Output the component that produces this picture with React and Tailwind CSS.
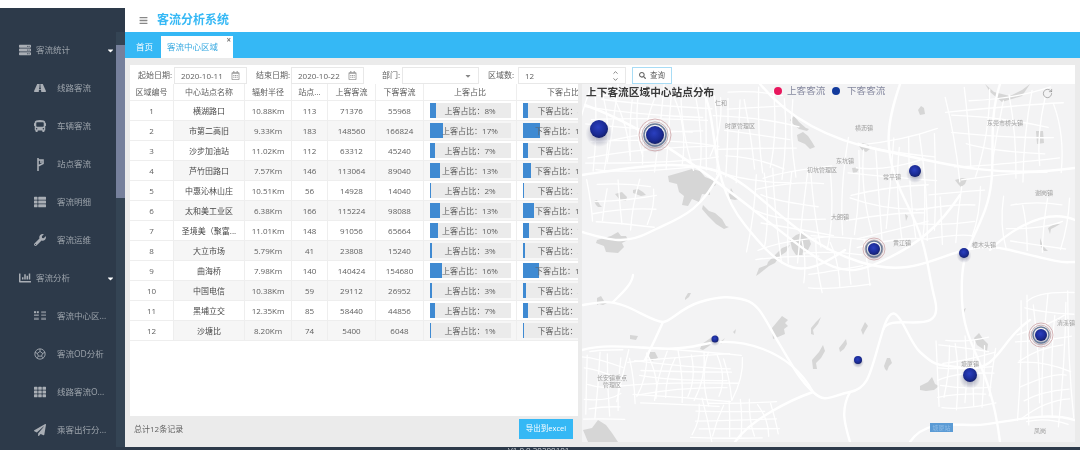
import React from "react";
import { FaRoad, FaBus, FaWrench, FaThList, FaChartBar, FaTh, FaPaperPlane, FaServer, FaRegCalendarAlt, FaSearch, FaBars, FaCaretDown } from "react-icons/fa";
import { RotateCw, ChevronUp, ChevronDown } from "lucide-react";

const font = { fontFamily: '"Open Sans","Noto Sans CJK SC",sans-serif' };

const Fork = () => (
  <svg width="11" height="13" viewBox="0 0 11 13" fill="none" stroke="currentColor" strokeWidth="1.6">
    <path d="M3 0v13M3 2h5v3.500L3 8M6 2v3" />
  </svg>
);
const Blocks = () => (
  <svg width="15" height="12" viewBox="0 0 15 12" fill="currentColor">
    <rect x="0" y="0" width="2.500" height="2.500" /><rect x="3.500" y="0" width="2.500" height="2.500" />
    <rect x="0" y="4" width="6" height="2" opacity=".7" /><rect x="0" y="8" width="6" height="3" opacity=".6" />
    <rect x="9" y="0" width="6" height="2.500" opacity=".6" /><rect x="9" y="4" width="6" height="2" opacity=".6" /><rect x="9" y="8" width="6" height="3" opacity=".6" />
  </svg>
);
const Ball = () => (
  <svg width="14" height="14" viewBox="0 0 14 14" fill="none" stroke="currentColor" strokeWidth="1">
    <circle cx="7" cy="7" r="6" /><path d="M7 4l3 2.200-1.100 3.300H5.100L4 6.200zM7 4V1M10 6.200l3-1M8.900 9.500l2 2.400M5.100 9.500l-2 2.400M4 6.200l-3-1" />
  </svg>
);

const menu = [
  { t: "客流统计", I: FaServer, top: true },
  { t: "线路客流", I: FaRoad },
  { t: "车辆客流", I: FaBus },
  { t: "站点客流", I: Fork },
  { t: "客流明细", I: FaThList },
  { t: "客流运维", I: FaWrench },
  { t: "客流分析", I: FaChartBar, top: true },
  { t: "客流中心区...", I: Blocks },
  { t: "客流OD分析", I: Ball },
  { t: "线路客流O...", I: FaTh },
  { t: "乘客出行分...", I: FaPaperPlane },
];

const rows = [
  [1, "横湖路口", "10.88Km", 113, 71376, 55968, 8, 5, 8],
  [2, "市第二高旧", "9.33Km", 183, 148560, 166824, 17, 17, 19],
  [3, "沙步加油站", "11.02Km", 112, 63312, 45240, 7, 5, 5],
  [4, "芦竹田路口", "7.57Km", 146, 113064, 89040, 13, 8.500, 10],
  [5, "中惠沁林山庄", "10.51Km", 56, 14928, 14040, 2, 1, 2],
  [6, "太和美工业区", "6.38Km", 166, 115224, 98088, 13, 11, 11],
  [7, "圣境美（聚富...", "11.01Km", 148, 91056, 65664, 10, 6, 7],
  [8, "大立市场", "5.79Km", 41, 23808, 15240, 3, 2, 2],
  [9, "曲海桥", "7.98Km", 140, 140424, 154680, 16, 16, 18],
  [10, "中国电信", "10.38Km", 59, 29112, 26952, 3, 3, 3],
  [11, "黑埔立交", "12.35Km", 85, 58440, 44856, 7, 5, 5],
  [12, "沙塘比", "8.20Km", 74, 5400, 6048, 1, 1, 1],
];

const cols = "grid grid-cols-[44px_71px_47px_36px_48px_48px_93px_93px]";

function Cell({ children, shade }) {
  return (
    <div className={`flex items-center justify-center border-r border-b border-[#eeeeee] whitespace-nowrap overflow-hidden ${shade ? "bg-[#f6f6f6]" : "bg-white"}`}>
      {children}
    </div>
  );
}

function Bar({ w, label }) {
  return (
    <div className="relative h-[15px] w-[81px] bg-[#ebebeb] flex items-center justify-center shrink-0">
      <div className="absolute left-0 top-0 h-full bg-[#3f8ad2]" style={{ width: w }} />
      <span className="relative">{label}</span>
    </div>
  );
}

/* ---------- map drawing ---------- */
function rng(seed) {
  let s = seed;
  return () => {
    s = (s * 16807) % 2147483647;
    return s / 2147483647;
  };
}
function cluster(seed, cx, cy, rx, ry, nh, nv) {
  const r = rng(seed);
  const out = [];
  for (let i = 0; i < nh; i++) {
    const y = cy - ry + (2 * ry * (i + 0.5)) / nh;
    const x0 = cx - rx * (0.6 + r() * 0.4);
    const x1 = cx + rx * (0.6 + r() * 0.4);
    const t = (r() - 0.5) * ry * 0.3;
    out.push(`M${x0} ${y + t}Q${cx + (r() - 0.5) * rx * 0.6} ${y + (r() - 0.5) * ry * 0.3} ${x1} ${y - t}`);
  }
  for (let i = 0; i < nv; i++) {
    const x = cx - rx + (2 * rx * (i + 0.5)) / nv;
    const y0 = cy - ry * (0.6 + r() * 0.4);
    const y1 = cy + ry * (0.6 + r() * 0.4);
    const t = (r() - 0.5) * rx * 0.25;
    out.push(`M${x + t} ${y0}Q${x + (r() - 0.5) * rx * 0.3} ${cy} ${x - t} ${y1}`);
  }
  return out;
}
const streets = [
  ...cluster(11, 650, 128, 70, 44, 11, 15),
  ...cluster(19, 620, 205, 38, 26, 4, 5),
  ...cluster(23, 755, 135, 45, 48, 7, 8),
  ...cluster(29, 790, 215, 45, 50, 7, 7),
  ...cluster(37, 890, 190, 50, 60, 9, 9),
  ...cluster(41, 1005, 135, 60, 48, 7, 8),
  ...cluster(47, 1035, 225, 40, 30, 3, 4),
  ...cluster(53, 680, 378, 62, 30, 9, 13),
  ...cluster(59, 603, 385, 22, 40, 7, 4),
  ...cluster(67, 735, 420, 45, 22, 5, 8),
  ...cluster(71, 965, 372, 32, 38, 8, 7),
  ...cluster(83, 1045, 360, 30, 70, 10, 7),
  ...cluster(89, 835, 262, 40, 32, 4, 5),
  ...cluster(91, 950, 215, 35, 30, 4, 4),
];
const majors = [
  "M583 305C600 302 610 300 625 306S655 322 663 322 680 308 700 302 730 296 745 300 765 320 780 345 800 380 813 392 830 396 850 392 870 372 883 330 905 338 920 352 935 365 967 368 1000 340 1030 320 1075 300",
  "M850 392C840 410 845 425 850 442M663 322C655 340 650 350 645 360M633 275C632 285 620 295 613 302",
  "M582 175C630 168 680 158 720 172S790 240 860 262 950 235 1010 250 1060 262 1075 262",
  "M585 105C640 125 690 160 760 215S840 280 880 262 940 225 960 195",
  "M700 84C722 125 705 175 745 225S800 280 845 250",
  "M760 84C790 120 830 140 880 150S990 180 1075 168",
  "M900 84C888 120 880 150 905 200S925 260 935 300 890 310 883 330",
  "M1000 84C985 130 1000 170 985 210S960 250 962 300 990 360 1000 442",
  "M582 350C620 340 660 355 700 345S790 350 813 392",
  "M910 442C925 420 950 425 975 425S1040 410 1075 420",
  "M582 232C610 240 625 245 650 232S700 215 720 172",
  "M1075 220C1040 205 1000 240 990 250M735 442C750 420 790 400 813 392",
];
const lakes = [
  "M668 176l14-4 10-3 8 2 5 6 8 3 3 5-6 3 0 7-8-1-3 8-7-3-4 7-6-1 2-9-5-4-2-8-8-2z",
  "M703 205l6 6 6 2 7 6 4 7 3 1-5 2-8-5-8-8-6-7z",
  "M597 240l14-4 7-4 3 4 5 0 2 4-6 3 2 4-6 6-12-1-2-6-8-3z",
  "M615 194l7-2 5 5-1 4-6-1z M633 190l5-1 5 3 3 3-5 1-8-3z",
  "M594 201l3-1 3 5 2 2-4 0-2-2z M731 188l3 6 5 5-4 1-5-1-1-4z",
  "M790 120l4-4 5 6 7 6 3 1-2 2-8-2-6-5z M797 135l6-3 5 4 4 6 3 5-5 2-5-5-7-3z",
  "M790 240l6-5 8-3 4 4 3 8-3 6-6 5-6 0-4-6z",
  "M702 344l10-7 5-3-2 6-6 6-6 4-3-1z M720 342l5-4-4 6z M733 332l3-3-1 5z",
  "M768 262l8-8 6-6 8-3-4 7-6 4-5 7-6 3-5 4-5 4-3 2 3-8 8-3z",
  "M772 328l5-6 5-6 6 4-3 3 3 3-4 3 1 5-7 3-5 2z",
  "M816 322l5-5-3 7-5 6 1 5-3-1 0-6z M630 335l8 1-2 4-6-1z M650 352l5 0 3 6-6 3-3-4z",
  "M583 430l9-2 6-8 8 5 6 8 6 9-30 0z",
  "M597 298l4-2 3 5 3 2-4 2-4-1-2 1z M685 298l3-5 3 0-2 4-4 3z",
  "M861 330l4-8 3 4-3 5-2 4z M839 348l4-5 3-4 1 5-3 5-4 3z M812 360l7-8 4-7 2 6-4 7-5 5 1 6-4 0z",
  "M920 386l8-4 4-5 3 7 4 2-5 4-8 1-6-1z M884 366l3-8 3 0 2 5-3 3-2 5-2-2z",
  "M974 338l5-5 4 6 5 5-1 7-4-2-6-4z M962 310l4-2-2 5z",
  "M862 150l-3-4 4-3 5 1 2 5-4 3z M852 168l8-1-3 5-4 1z M918 110l3-4 3 2 1 6-5 1z",
  "M955 180l7-2 5 1-2 5-4 3-3-3z M905 214l3 2-2 5z",
  "M1036 131l7 0 1 12-7 1z",
  "M985 84l9 8 16 4 12-6 8-6-8 12-20 6-12-10z",
  "M1048 228l6-4 6 0-5 3-4 2-1 5z M1040 238l3 8 5 5-4 0-4-6z",
];
const labels = [
  ["仁和", 721, 105], ["时厦管理区", 740, 128], ["横沥镇", 864, 130], ["东坑镇", 845, 163], ["初坑管理区", 822, 172],
  ["常平镇", 892, 179], ["东莞市桥头镇", 1005, 125], ["谢岗镇", 1044, 195], ["大朗镇", 840, 219], ["黄江镇", 902, 245],
  ["樟木头镇", 984, 247], ["塘厦镇", 970, 366], ["清溪镇", 1066, 325], ["凤岗", 1040, 433], ["长安镇重点", 612, 380], ["管理区", 612, 387],
];
const markers = [
  [599, 129, 9, 0], [655, 135, 9, 16], [915, 171, 6, 0], [874, 249, 6, 11], [964, 253, 5, 0],
  [715, 339, 3.500, 0], [858, 360, 4, 0], [970, 375, 7, 0], [1041, 335, 6, 12],
];

function MapArt() {
  return (
    <svg className="block w-full h-full" viewBox="582 84 493 358" fill="none">
      <defs>
        <radialGradient id="ball" cx="45%" cy="40%" r="60%">
          <stop offset="0%" stopColor="#2a3fc0" />
          <stop offset="70%" stopColor="#1a2a92" />
          <stop offset="100%" stopColor="#14206a" />
        </radialGradient>
        <radialGradient id="shadow">
          <stop offset="0%" stopColor="#2a2f5c" stopOpacity=".5" />
          <stop offset="100%" stopColor="#2a2f5c" stopOpacity="0" />
        </radialGradient>
      </defs>
      {lakes.map((d, i) => <path key={i} d={d} fill="#d6d6d6" />)}
      <g stroke="#ffffff" strokeWidth="1.300" strokeLinecap="round">
        {streets.map((d, i) => <path key={i} d={d} />)}
      </g>
      <g stroke="#ffffff" strokeWidth="2.400" strokeLinecap="round">
        {majors.map((d, i) => <path key={i} d={d} />)}
      </g>
      <g fill="#a0a0a0" fontSize="6" textAnchor="middle" style={font}>
        {labels.map(([t, x, y]) => <text key={t} x={x} y={y}>{t}</text>)}
      </g>
      <rect x="930" y="423" width="23" height="9" fill="#5b9bd5" />
      <text x="941.500" y="430" fontSize="6" textAnchor="middle" fill="#8fbce6" style={font}>塘厦站</text>
      {markers.map(([x, y, r, ring], i) => (
        <g key={i}>
          <ellipse cx={x} cy={y + r * 0.5} rx={r * 1.5} ry={r * 1.5} fill="url(#shadow)" />
          {ring > 0 && (
            <>
              <circle cx={x} cy={y} r={ring} stroke="#c99a9c" strokeWidth=".7" />
              <circle cx={x} cy={y} r={ring * 0.82} stroke="#b5959b" strokeWidth=".7" />
              <circle cx={x} cy={y} r={r + 2} stroke="#6a7c98" strokeWidth="1.500" />
            </>
          )}
          <circle cx={x} cy={y} r={r} fill="url(#ball)" />
        </g>
      ))}
    </svg>
  );
}

function Sidebar() {
  return (
    <div className="relative w-[125px] shrink-0 bg-[#2d3a4a] pt-[23px] overflow-hidden text-[8.5px] text-[#9ca3ab]">
      {menu.map(({ t, I, top }) => (
        <div key={t} className={`h-[38px] flex items-center whitespace-nowrap ${top ? "pl-[13px]" : "pl-[34px]"}`}>
          <span className={`flex justify-center text-[#a9aeb5] text-[12px] ${top ? "w-[23px]" : "w-[12px] mr-[11px]"}`}><I /></span>
          <span>{t}</span>
          {top && <FaCaretDown className="absolute left-[106px] text-[9px] text-white" />}
        </div>
      ))}
      <div className="absolute right-0 top-[24px] bottom-0 w-[9px] bg-[#344454]">
        <div className="mt-[13px] h-[153px] bg-[#76809c]" />
      </div>
    </div>
  );
}

function Field({ label, children, w, ml = "ml-0", lw, gap = "ml-[2px]" }) {
  return (
    <>
      <span className={`shrink-0 whitespace-nowrap ${ml} ${lw}`}>{label}</span>
      <div className={`h-[17px] mt-[2px] flex items-center justify-between px-[6px] border border-[#e8e8e8] bg-white shrink-0 ${gap} ${w}`}>{children}</div>
    </>
  );
}

export default function App() {
  return (
    <div className="w-[1080px] h-[450px] flex flex-col overflow-hidden bg-[#ebebeb] blur-[0.7px] text-[#606060]" style={font}>
      <div className="h-2 bg-white shrink-0" />
      <div className="h-[439px] flex shrink-0">
        <Sidebar />
        <div className="flex-1 flex flex-col min-w-0">
          <div className="h-6 bg-white flex items-center pl-[14px] shrink-0">
            <FaBars className="text-[9px] text-[#888888]" />
            <span className="ml-[9px] text-[12px] font-semibold text-[#35b8f5]">客流分析系统</span>
          </div>
          <div className="h-[26px] bg-[#35b8f5] flex items-end pl-[11px] text-[8.5px] shrink-0">
            <span className="h-[22px] flex items-center text-white">首页</span>
            <div className="relative ml-[8px] h-[22px] w-[72px] bg-white flex items-center pl-[6px] text-[#35a8e0]">
              客流中心区域
              <span className="absolute right-[2px] top-[-1px] text-[8px] leading-[10px] font-bold text-[#777777]">×</span>
            </div>
          </div>
          <div className="flex-1 flex flex-col pt-[7px] px-[5px] pb-[5px] min-h-0">
            <div className="h-[19px] bg-white flex items-start shrink-0 text-[8px] leading-[19px] relative z-10">
              <Field label="起始日期:" lw="w-[42px] pl-[8px]" w="w-[73px]"><span>2020-10-11</span><FaRegCalendarAlt className="text-[9px] text-[#999999]" /></Field>
              <Field label="结束日期:" ml="ml-[9px]" lw="w-[34px]" gap="ml-[1px]" w="w-[73px]"><span>2020-10-22</span><FaRegCalendarAlt className="text-[9px] text-[#999999]" /></Field>
              <Field label="部门:" ml="ml-[18px]" lw="w-[18px]" gap="ml-[2px]" w="w-[77px]"><span /><FaCaretDown className="text-[8px] text-[#888888]" /></Field>
              <Field label="区域数:" ml="ml-[9px]" lw="w-[28px]" gap="ml-[2px]" w="w-[108px]">
                <span>12</span>
                <span className="flex flex-col text-[#777777]"><ChevronUp size={7} strokeWidth={3} /><ChevronDown size={7} strokeWidth={3} /></span>
              </Field>
              <div className="ml-[6px] mt-[2px] h-[17px] w-[40px] border border-[#a8dcf5] flex items-center justify-center gap-[4px] shrink-0 text-[7.5px]">
                <FaSearch className="text-[7px] text-[#666666]" />查询
              </div>
            </div>
            <div className="flex-1 flex min-h-0">
              <div className="w-[448px] shrink-0 flex flex-col text-[8px] overflow-hidden">
                <div className="flex-1 bg-white overflow-hidden">
                  <div className={`${cols} h-[17px] w-[480px]`}>
                    {["区域编号", "中心站点名称", "辐射半径", "站点...", "上客客流", "下客客流", "上客占比", "下客占比"].map((h) => (
                      <Cell key={h}>{h}</Cell>
                    ))}
                  </div>
                  {rows.map((r, i) => {
                    const s = i % 2 === 1;
                    return (
                      <div key={r[0]} className={`${cols} h-5 w-[480px]`}>
                        <Cell>{r[0]}</Cell>
                        <Cell shade={s}><span className="text-[#484848]">{r[1]}</span></Cell>
                        <Cell shade={s}>{r[2]}</Cell>
                        <Cell shade={s}>{r[3]}</Cell>
                        <Cell shade={s}>{r[4]}</Cell>
                        <Cell shade={s}>{r[5]}</Cell>
                        <Cell shade={s}><Bar w={r[6] * 0.8} label={`上客占比：${r[6]}%`} /></Cell>
                        <Cell shade={s}><Bar w={r[7]} label={`下客占比：${r[8]}%`} /></Cell>
                      </div>
                    );
                  })}
                </div>
                <div className="h-[26px] shrink-0 flex items-center justify-between pl-[4px] pr-[5px] bg-[#ebebeb]">
                  <span>总计12条记录</span>
                  <span className="h-5 w-[54px] flex items-center justify-center bg-[#35b8f5] text-white text-[7.5px]">导出到excel</span>
                </div>
              </div>
              <div className="relative flex-1 min-w-0 border-l-4 border-[#ebebeb] bg-[#f3f3f4] overflow-hidden">
                <MapArt />
                <span className="absolute left-[4px] top-[1px] text-[10.7px] leading-[14px] font-bold text-[#3a3a3a] whitespace-nowrap">上下客流区域中心站点分布</span>
                <span className="absolute left-[192px] top-[3px] w-2 h-2 rounded-full bg-[#e8175d]" />
                <span className="absolute left-[205px] top-[0px] text-[9.6px] leading-[13px] text-[#85889f] whitespace-nowrap">上客客流</span>
                <span className="absolute left-[250px] top-[3px] w-2 h-2 rounded-full bg-[#123a9c]" />
                <span className="absolute left-[265px] top-[0px] text-[9.6px] leading-[13px] text-[#85889f] whitespace-nowrap">下客客流</span>
                <RotateCw className="absolute left-[460px] top-[4px] text-[#777777]" size={11} strokeWidth={1.2} />
              </div>
            </div>
          </div>
        </div>
      </div>
      <div className="h-[3px] bg-[#2d3a4a] shrink-0 overflow-hidden text-[8px] leading-[6px] text-[#d0d4d8] pl-[508px]">V1.0.0 20200101</div>
    </div>
  );
}
